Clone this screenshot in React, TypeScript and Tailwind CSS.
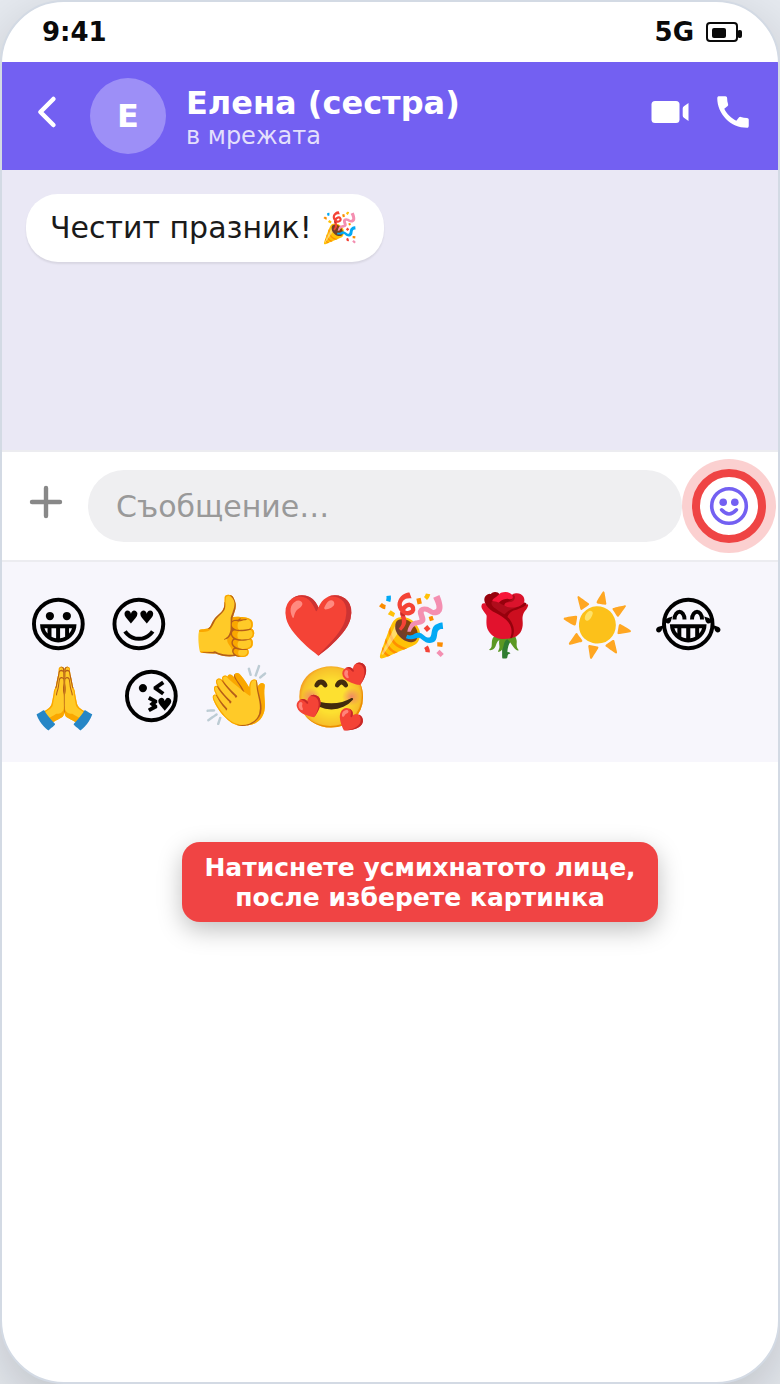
const emojis = [
  { char: "😀", label: "Усмивка" },
  { char: "😍", label: "Влюбен" },
  { char: "👍", label: "Палец нагоре" },
  { char: "❤️", label: "Сърце" },
  { char: "🎉", label: "Празник" },
  { char: "🌹", label: "Роза" },
  { char: "☀️", label: "Слънце" },
  { char: "😂", label: "Смях" },
  { char: "🙏", label: "Благодаря" },
  { char: "😘", label: "Целувка" },
  { char: "👏", label: "Аплодисменти" },
  { char: "🥰", label: "Обич" },
];

const BatteryIcon = () => (
  <svg width="36" height="20" viewBox="0 0 36 20" aria-hidden="true">
    <rect x="1" y="1" width="30" height="18" rx="3" fill="none" stroke="#0a0a0a" strokeWidth="2" />
    <rect x="6" y="6" width="14" height="10" rx="2" fill="#0a0a0a" />
    <rect x="31.5" y="8" width="4.5" height="8" rx="2" fill="#0a0a0a" />
  </svg>
);

const BackIcon = () => (
  <svg width="52" height="52" viewBox="0 0 24 24" fill="none" stroke="currentColor" strokeWidth="2.1" strokeLinecap="round" strokeLinejoin="round">
    <path d="M14.5 18l-6-6 6-6" />
  </svg>
);

const VideoIcon = () => (
  <svg width="42" height="42" viewBox="0 0 42 42" fill="currentColor">
    <rect x="1.5" y="10" width="28" height="22" rx="3.5" />
    <path d="M38.5 12v18l-4.6-3.2q-1.2-.8-1.2-2.2v-7.2q0-1.4 1.2-2.2z" />
  </svg>
);

const PhoneIcon = () => (
  <svg width="42" height="42" viewBox="0 0 24 24" fill="currentColor">
    <path d="M20.01 15.38c-1.23 0-2.42-.2-3.53-.56a.977.977 0 0 0-1.01.24l-1.57 1.97c-2.83-1.35-5.48-3.9-6.89-6.83l1.95-1.66c.27-.28.35-.67.24-1.02-.37-1.11-.56-2.3-.56-3.53 0-.54-.45-.99-.99-.99H4.19C3.65 3 3 3.24 3 3.99 3 13.28 10.73 21 20.01 21c.71 0 .99-.63.99-1.18v-3.45c0-.54-.45-.99-.99-.99z" />
  </svg>
);

const PlusIcon = () => (
  <svg width="48" height="48" viewBox="0 0 24 24" fill="none" stroke="currentColor" strokeWidth="2.2" strokeLinecap="round">
    <path d="M12 5v14M5 12h14" />
  </svg>
);

const SmileIcon = () => (
  <svg width="40" height="40" viewBox="0 0 40 40" fill="none" stroke="currentColor" strokeWidth="3.6" strokeLinecap="round">
    <circle cx="20" cy="20" r="17.3" />
    <path d="M12.6 23.8q7.4 8.4 14.8 0" />
    <circle cx="14.2" cy="16.2" r="3.8" fill="currentColor" stroke="none" />
    <circle cx="25.8" cy="16.2" r="3.8" fill="currentColor" stroke="none" />
  </svg>
);

const App = () => {
  return (
    <div className="min-h-screen bg-[#e6eaf0] font-['DejaVu_Sans',sans-serif]">
      <div className="flex min-h-screen flex-col overflow-hidden rounded-[64px] border-2 border-[#d3dae4] bg-white shadow-[0_20px_60px_rgba(0,0,0,0.18)]">
        <div className="flex h-[60px] items-center justify-between pr-9 pl-10 text-[26px] font-bold text-[#0a0a0a]">
          <span>9:41</span>
          <div className="flex items-center gap-3">
            <span>5G</span>
            <BatteryIcon />
          </div>
        </div>

        <header className="flex h-[108px] items-center bg-[#7360f2] pr-6 pl-5 text-white">
          <button type="button" aria-label="Назад" className="mr-4 pb-2">
            <BackIcon />
          </button>
          <div className="mr-5 flex size-[76px] items-center justify-center rounded-full bg-[#9d8ff7] text-[32px] font-bold">
            Е
          </div>
          <div className="flex-1 pt-1">
            <h1 className="text-[32px] leading-9 font-bold">Елена (сестра)</h1>
            <p className="text-2xl leading-[30px] text-[#e3dffc]">в мрежата</p>
          </div>
          <div className="flex gap-5 pb-2">
            <button type="button" aria-label="Видео разговор">
              <VideoIcon />
            </button>
            <button type="button" aria-label="Обаждане">
              <PhoneIcon />
            </button>
          </div>
        </header>

        <main className="flex min-h-[280px] flex-col items-start bg-[#eae8f5] p-6">
          <p className="rounded-[32px] bg-white py-4 pr-[26px] pl-6 text-[30px] leading-9 text-[#1a1a1a] shadow-[0_2px_2px_rgba(0,0,0,0.08)]">
            Честит празник! 🎉
          </p>
        </main>

        <form className="flex h-28 items-center border-y-2 border-[#ececf0] bg-white pr-3 pl-5">
          <button type="button" aria-label="Добави" className="mr-[18px] pb-2 text-[#888888]">
            <PlusIcon />
          </button>
          <input
            type="text"
            aria-label="Съобщение"
            placeholder="Съобщение…"
            className="h-[72px] min-w-0 flex-1 rounded-full bg-[#efeff1] px-7 text-[30px] text-[#1a1a1a] outline-none placeholder:text-[#999999]"
          />
          <button
            type="button"
            aria-label="Емотикони"
            className="ml-2.5 flex size-[74px] items-center justify-center rounded-full border-8 border-[#ef4444] bg-white text-[#7360f2] shadow-[0_0_0_10px_rgba(239,68,68,0.25)]"
          >
            <SmileIcon />
          </button>
        </form>

        <section aria-label="Емотикони" className="flex flex-wrap items-baseline gap-x-[18px] bg-[#f7f6fc] px-[25px] pt-[27px] pb-[29px] text-[60px] leading-[72px] text-black">
          {emojis.map((emoji) => (
            <button key={emoji.char} type="button" aria-label={emoji.label}>
              {emoji.char}
            </button>
          ))}
        </section>

        <div className="mt-20 flex justify-center pl-[60px]">
          <p className="rounded-[18px] bg-[#f04444] px-[22px] pt-[11px] pb-[9px] text-center text-[25px] leading-[30px] font-bold text-white shadow-[0_8px_24px_rgba(0,0,0,0.25)]">
            Натиснете усмихнатото лице,
            <br />
            после изберете картинка
          </p>
        </div>
      </div>
    </div>
  );
};

export default App;
